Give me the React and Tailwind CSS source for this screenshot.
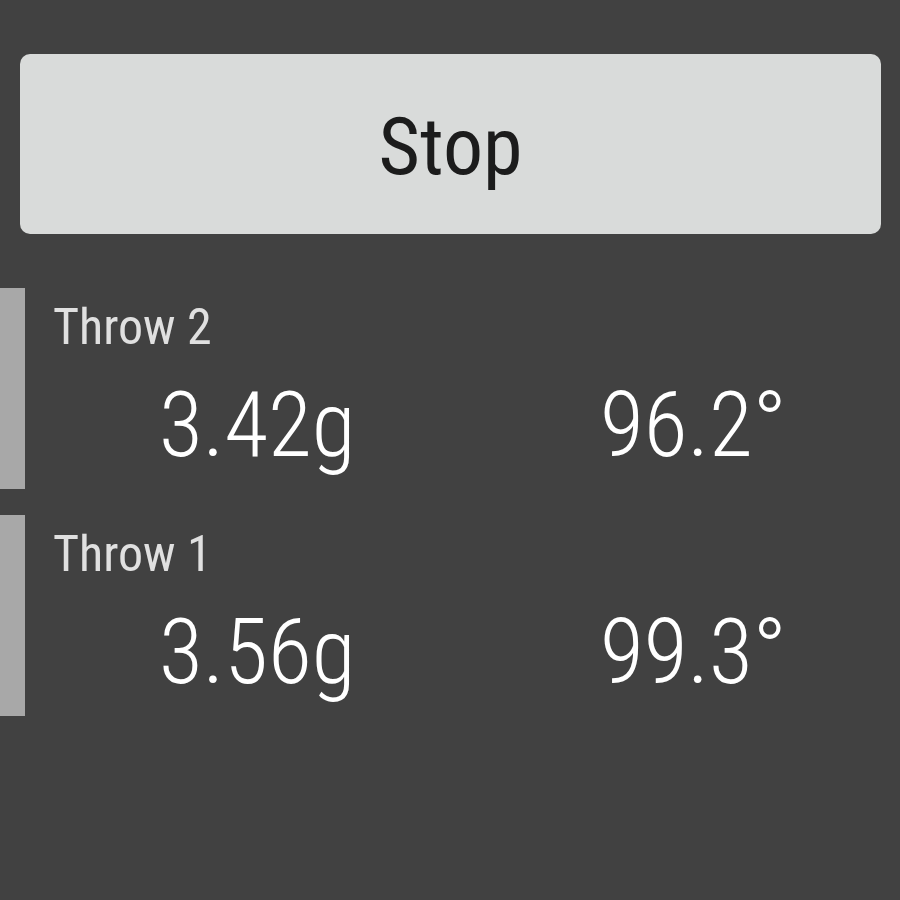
export default function App() {
  const throws = [
    { label: "Throw 2", g: "3.42g", deg: "96.2°" },
    { label: "Throw 1", g: "3.56g", deg: "99.3°" },
  ];
  return (
    <div
      className="w-[900px] h-[900px] bg-[#414141] pt-[54px] overflow-hidden"
      style={{ fontFamily: "Roboto, 'Liberation Sans', sans-serif", fontStretch: "condensed" }}
    >
      <div className="ml-[20px] mr-[19px] h-[180px] rounded-[10px] bg-[#d9dbda] flex items-center justify-center pt-[5px]">
        <span className="text-[80px] leading-none text-[#1c1c1c] font-normal">Stop</span>
      </div>
      <div className="mt-[54px] flex flex-col gap-[26px]">
        {throws.map((t) => (
          <div key={t.label} className="flex h-[201px]">
            <div className="w-[25px] bg-[#a8a8a8]" />
            <div className="flex-1 pl-[28px]">
              <div className="text-[50px] leading-none text-[#e0e0e0] mt-[14px]">{t.label}</div>
              <div className="grid grid-cols-[441px_1fr] ml-[106px] mt-[29px] text-[90px] leading-none text-white font-light">
                <span>{t.g}</span>
                <span>{t.deg}</span>
              </div>
            </div>
          </div>
        ))}
      </div>
    </div>
  );
}
